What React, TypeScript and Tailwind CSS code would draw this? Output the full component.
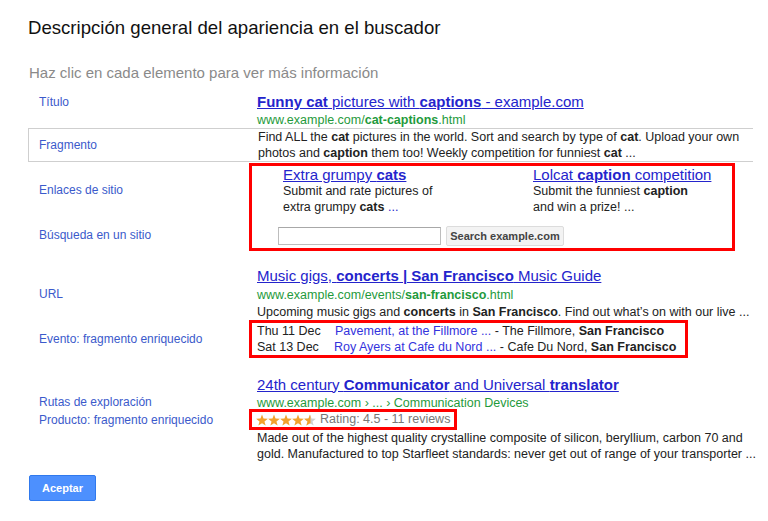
import React from "react";

function Row({
  label,
  children,
  cls = "",
  labelCls = "pl-[11px]",
  contentCls = "pl-[8px]",
}: {
  label?: React.ReactNode;
  children?: React.ReactNode;
  cls?: string;
  labelCls?: string;
  contentCls?: string;
}) {
  return (
    <div className={`flex items-center ${cls}`}>
      <div className={`w-[221px] shrink-0 text-[12px] leading-[16px] text-[#3b5acb] whitespace-nowrap ${labelCls}`}>
        {label}
      </div>
      <div className={`whitespace-nowrap ${contentCls}`}>{children}</div>
    </div>
  );
}

function starPath(cx: number, cy: number, ro: number, ri: number) {
  const pts: string[] = [];
  for (let i = 0; i < 10; i++) {
    const r = i % 2 === 0 ? ro : ri;
    const a = -Math.PI / 2 + (i * Math.PI) / 5;
    pts.push(`${(cx + r * Math.cos(a)).toFixed(2)} ${(cy + r * Math.sin(a)).toFixed(2)}`);
  }
  return "M" + pts.join(" L") + " Z";
}

function Stars() {
  const d = starPath(6, 6.6, 6.2, 2.6);
  return (
    <svg width="60" height="12" viewBox="0 0 60 12" className="block">
      <defs>
        <clipPath id="halfstar">
          <rect x="0" y="0" width="6.5" height="12" />
        </clipPath>
      </defs>
      {[0, 1, 2, 3].map((i) => (
        <path key={i} d={d} transform={`translate(${i * 12} 0)`} fill="#f2a22c" />
      ))}
      <g transform="translate(48 0)">
        <path d={d} fill="#d0d0d0" />
        <path d={d} fill="#f2a22c" clipPath="url(#halfstar)" />
      </g>
    </svg>
  );
}

export default function App() {
  const link = "text-[#2424cc] underline";
  return (
    <div className="w-[768px] h-[521px] overflow-hidden bg-white font-['Liberation_Sans',Arial,sans-serif] text-[#222]">
      <div className="pl-[28px] pt-[16px]">
        <h1 className="text-[18.6px] leading-[24px] text-[#111]">
          Descripción general del apariencia en el buscador
        </h1>
        <p className="mt-[24px] pl-[1px] text-[15px] leading-[18px] text-[#8a8a8a]">
          Haz clic en cada elemento para ver más información
        </p>

        <div className="mt-[10px] w-[725px]">
          {/* Título */}
          <Row label="Título" cls="h-[20px]">
            <span className={`text-[15px] leading-[19px] ${link}`}>
              <b>Funny cat</b> pictures with <b>captions</b> - example.com
            </span>
          </Row>
          <Row cls="h-[14px]">
            <span className="text-[12.5px] leading-[14px] text-[#1f9a3c]">
              www.example.com/<b>cat-captions</b>.html
            </span>
          </Row>

          {/* Fragmento */}
          <Row
            label="Fragmento"
            cls="mt-[2px] h-[34px] border border-r-0 border-[#cfcfcf]"
            labelCls="pl-[10px]"
          >
            <div className="text-[12.5px] leading-[16px] text-[#222]">
              Find ALL the <b>cat</b> pictures in the world. Sort and search by type of <b>cat</b>. Upload your own
              <br />
              photos and <b>caption</b> them too! Weekly competition for funniest <b>cat</b> ...
            </div>
          </Row>

          {/* Sitelinks + search */}
          <div className="mt-[1px] flex">
            <div className="w-[221px] shrink-0 pl-[11px] text-[12px] leading-[16px] text-[#3b5acb]">
              <div className="pt-[19px]">Enlaces de sitio</div>
              <div className="mt-[29px]">Búsqueda en un sitio</div>
            </div>
            <div className="w-[486px] h-[88px] border-[3px] border-[#f00]">
              <div className="flex pl-[31px]">
                <div className="w-[250px]">
                  <div className={`text-[15px] leading-[17px] ${link}`}>
                    Extra grumpy <b>cats</b>
                  </div>
                  <div className="text-[12.5px] leading-[16px]">
                    Submit and rate pictures of
                    <br />
                    extra grumpy <b>cats</b> <span className="text-[#2424cc]">...</span>
                  </div>
                </div>
                <div>
                  <div className={`text-[15px] leading-[17px] ${link}`}>
                    Lolcat <b>caption</b> competition
                  </div>
                  <div className="text-[12.5px] leading-[16px]">
                    Submit the funniest <b>caption</b>
                    <br />
                    and win a prize! ...
                  </div>
                </div>
              </div>
              <div className="mt-[11px] flex items-center pl-[26px]">
                <div className="w-[163px] h-[18px] border border-[#bdbdbd] border-t-[#a8a8a8] bg-white" />
                <div className="ml-[5px] flex h-[20px] w-[118px] items-center justify-center rounded-[2px] border border-[#dcdcdc] bg-[#f3f3f3] text-[11px] font-bold text-[#444]">
                  Search example.com
                </div>
              </div>
            </div>
          </div>

          {/* Music gigs */}
          <Row cls="mt-[15px] h-[19px]">
            <span className={`text-[15px] leading-[19px] ${link}`}>
              Music gigs, <b>concerts | San Francisco</b> Music Guide
            </span>
          </Row>
          <Row label="URL" cls="h-[17px]">
            <span className="text-[12.5px] leading-[17px] text-[#1f9a3c]">
              www.example.com/events/<b>san-francisco</b>.html
            </span>
          </Row>
          <Row cls="h-[17px]">
            <span className="text-[12.5px] leading-[17px]">
              Upcoming music gigs and <b>concerts</b> in <b>San Francisco</b>. Find out what’s on with our live ...
            </span>
          </Row>

          {/* Event rich snippet */}
          <Row label="Evento: fragmento enriquecido" cls="mt-[1px]" contentCls="">
            <div className="w-[439px] h-[38px] border-[3px] border-[#f00] pl-[5px] text-[12.5px] leading-[16px]">
              <div className="flex">
                <span className="w-[78px]">Thu 11 Dec</span>
                <span>
                  <span className="text-[#3333dd]">Pavement, at the Fillmore ...</span> - The Fillmore,{" "}
                  <b>San Francisco</b>
                </span>
              </div>
              <div className="flex">
                <span className="w-[77px]">Sat 13 Dec</span>
                <span>
                  <span className="text-[#3333dd]">Roy Ayers at Cafe du Nord ...</span> - Cafe Du Nord,{" "}
                  <b>San Francisco</b>
                </span>
              </div>
            </div>
          </Row>

          {/* Product */}
          <Row cls="mt-[17px] h-[19px]">
            <span className={`text-[15px] leading-[19px] ${link}`}>
              24th century <b>Communicator</b> and Universal <b>translator</b>
            </span>
          </Row>
          <Row label="Rutas de exploración" cls="h-[15px]">
            <span className="text-[12.5px] leading-[15px] text-[#1f9a3c]">
              www.example.com › ... › Communication Devices
            </span>
          </Row>
          <Row label="Producto: fragmento enriquecido" contentCls="">
            <div className="flex h-[21px] w-[208px] items-center border-[3px] border-[#f00] pl-[4px]">
              <Stars />
              <span className="ml-[4px] text-[12.5px] leading-[15px] text-[#777]">Rating: 4.5 - 11 reviews</span>
            </div>
          </Row>
          <Row>
            <div className="text-[12.5px] leading-[16px]">
              Made out of the highest quality crystalline composite of silicon, beryllium, carbon 70 and
              <br />
              gold. Manufactured to top Starfleet standards: never get out of range of your transporter ...
            </div>
          </Row>
        </div>

        <button className="mt-[13px] ml-[1px] flex h-[26px] w-[67px] items-center justify-center rounded-[2px] border border-[#3079ed] bg-[#4d90fe] text-[11px] font-bold text-white">
          Aceptar
        </button>
      </div>
    </div>
  );
}
